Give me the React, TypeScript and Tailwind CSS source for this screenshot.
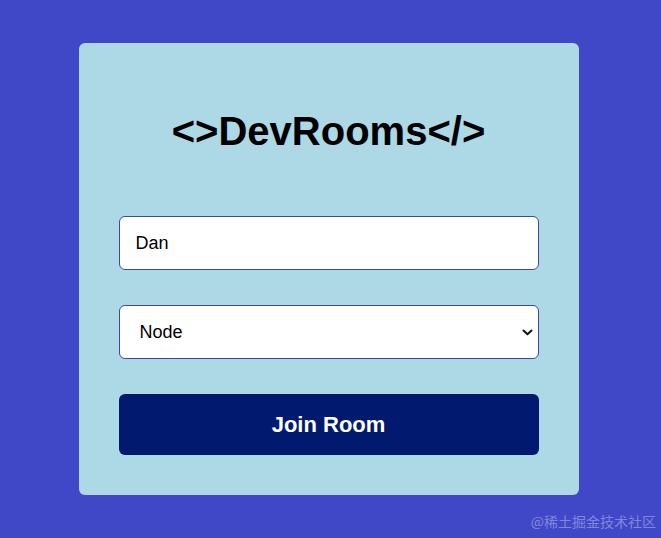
import { useState } from "react";

export default function App() {
  const [username, setUsername] = useState("Dan");
  const [room, setRoom] = useState("node");

  return (
    <main className="relative min-h-[538px] flex items-center justify-center bg-[#4048c8] font-['Liberation_Sans',Arial,sans-serif]">
      <div className="mr-[4px] w-[500px] rounded-[6px] bg-[#add8e6] px-10 pt-[65px] pb-10 flex flex-col">
        <h1 className="text-center text-[40px] leading-[46px] font-bold text-black">
          &lt;&gt;DevRooms&lt;/&gt;
        </h1>

        <input
          type="text"
          value={username}
          onChange={(e) => setUsername(e.target.value)}
          className="mt-[62px] h-[54px] w-full rounded-[6px] border border-[#3b4a9c] bg-white px-4 text-[18px] text-black outline-none"
        />

        <div className="relative mt-[35px]">
          <select
            value={room}
            onChange={(e) => setRoom(e.target.value)}
            className="h-[54px] w-full appearance-none rounded-[6px] border border-[#3b4a9c] bg-white pl-[20px] pr-10 text-[18px] text-black outline-none"
          >
            <option value="node">Node</option>
            <option value="react">React</option>
            <option value="vue">Vue</option>
          </select>
          {/* dropdown chevron */}
          <svg
            className="pointer-events-none absolute right-[6px] top-[24px]"
            width="11"
            height="7"
            viewBox="0 0 11 7"
            fill="none"
          >
            <path d="M1.5 1.5 L5.5 5.2 L9.5 1.5" stroke="#111" strokeWidth="2" strokeLinecap="round" strokeLinejoin="round" />
          </svg>
        </div>

        <button className="mt-[35px] h-[61px] w-full rounded-[6px] bg-[#011a6f] text-[22px] font-bold text-white">
          Join Room
        </button>
      </div>

      <span className="absolute right-[5px] bottom-[6px] text-[14px] text-white/35 font-['Noto_Sans_CJK_SC',sans-serif]">
        @稀土掘金技术社区
      </span>
    </main>
  );
}
